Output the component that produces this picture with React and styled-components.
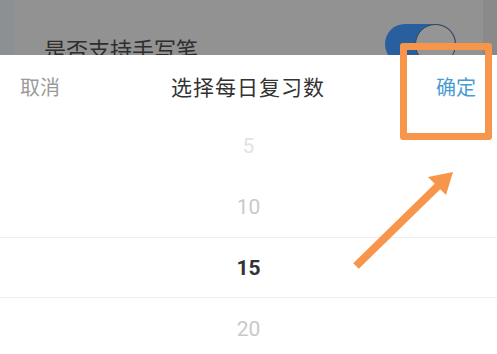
import React from "react";
import styled, { createGlobalStyle } from "styled-components";

const Global = createGlobalStyle`
  html, body { margin: 0; padding: 0; background: #fff; }
  body { font-family: Roboto, "Noto Sans CJK SC", sans-serif; }
  * { box-sizing: border-box; }
`;

const Page = styled.div`
  position: relative;
  width: 497px;
  height: 354px;
  overflow: hidden;
  display: flex;
  flex-direction: column;
`;

const Backdrop = styled.div`
  height: 55px;
  flex: none;
  background: #8a8a8a;
  border-left: 14px solid #8b9095;
  display: flex;
  overflow: hidden;
`;

const Card = styled.div`
  width: 469px;
  background: #929292;
  padding: 24px 27px 0 30px;
  flex: none;
`;

const SettingRow = styled.div`
  display: flex;
  align-items: flex-start;
  justify-content: space-between;
`;

const SettingLabel = styled.span`
  font-family: "Noto Sans CJK SC", sans-serif;
  font-size: 22px;
  line-height: 32px;
  color: #2e2e2e;
  margin-top: 8px;
`;

const Toggle = styled.div`
  position: relative;
  width: 71px;
  height: 40px;
  border-radius: 20px;
  background: #2a5f9f;
  flex: none;
`;

const Thumb = styled.div`
  position: absolute;
  right: 0;
  top: 0;
  width: 41px;
  height: 41px;
  border-radius: 50%;
  background: #959595;
  border: 1.5px solid #3c4550;
`;

const Sheet = styled.div`
  flex: 1;
  background: #fff;
  display: flex;
  flex-direction: column;
`;

const Header = styled.div`
  height: 60px;
  display: grid;
  grid-template-columns: 1fr auto 1fr;
  align-items: center;
  padding: 2px 21px 0 20px;
  font-family: "Noto Sans CJK SC", sans-serif;
`;

const Action = styled.span`
  font-size: 20px;
  color: ${(p) => p.$color};
  justify-self: ${(p) => p.$align};
`;

const Title = styled.span`
  font-size: 21px;
  letter-spacing: 1px;
  color: #333;
`;

const Picker = styled.div`
  display: flex;
  flex-direction: column;
`;

const Item = styled.div`
  height: 61px;
  flex: none;
  display: flex;
  align-items: center;
  justify-content: center;
  font-size: 21px;
  color: ${(p) => (p.$selected ? "#333" : p.$far ? "#e2e2e2" : "#c9c9c9")};
  font-weight: ${(p) => (p.$selected ? 700 : 400)};
  border-top: ${(p) => (p.$selected ? "1px solid #efefef" : "none")};
  border-bottom: ${(p) => (p.$selected ? "1px solid #efefef" : "none")};
`;

const Highlight = styled.div`
  position: absolute;
  left: 400px;
  top: 43px;
  width: 92px;
  height: 97px;
  border: 7px solid #f7964b;
  border-radius: 3px;
`;

const Arrow = styled.svg`
  position: absolute;
  left: 0;
  top: 0;
  pointer-events: none;
`;

export default function App() {
  return (
    <Page>
      <Global />
      <Backdrop>
        <Card>
          <SettingRow>
            <SettingLabel>是否支持手写笔</SettingLabel>
            <Toggle>
              <Thumb />
            </Toggle>
          </SettingRow>
        </Card>
      </Backdrop>
      <Sheet>
        <Header>
          <Action $color="#9a9a9a" $align="start">取消</Action>
          <Title>选择每日复习数</Title>
          <Action $color="#4b9bd3" $align="end">确定</Action>
        </Header>
        <Picker>
          <Item $far>5</Item>
          <Item>10</Item>
          <Item $selected>15</Item>
          <Item>20</Item>
        </Picker>
      </Sheet>
      <Highlight />
      <Arrow width="497" height="354" viewBox="0 0 497 354">
        <line x1="356" y1="266" x2="440" y2="184" stroke="#f7964b" strokeWidth="8" strokeLinecap="butt" />
        <polygon points="453,172 428,177 446,195" fill="#f7964b" />
      </Arrow>
    </Page>
  );
}
